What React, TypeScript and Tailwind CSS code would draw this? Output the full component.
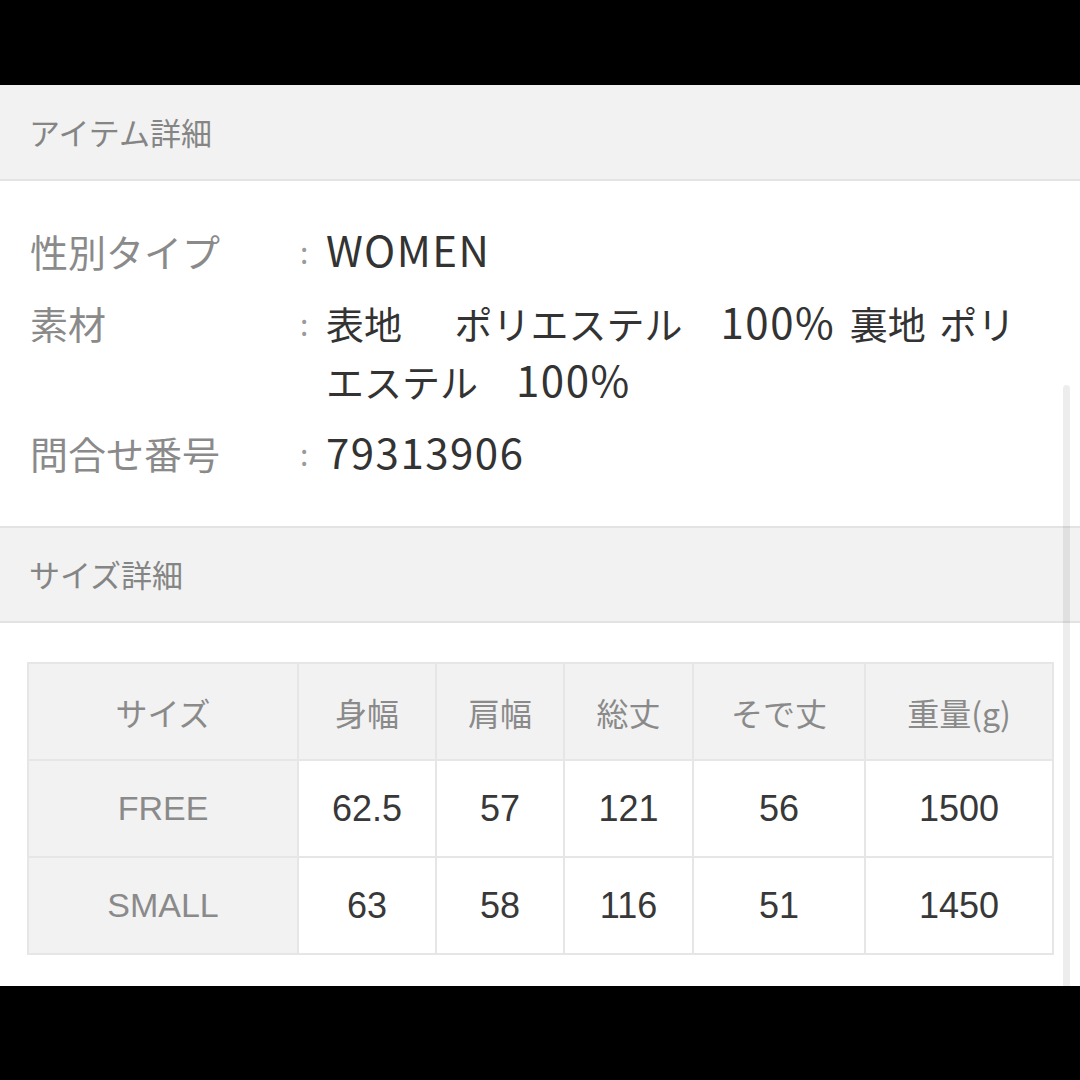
import React from "react";

const jp = "font-['Noto_Sans_CJK_JP','Noto_Sans_CJK_SC',sans-serif]";
const tb = "font-['Liberation_Sans','Noto_Sans_CJK_JP',sans-serif]";

const headers = ["サイズ", "身幅", "肩幅", "総丈", "そで丈", "重量(g)"];
const rows = [
  ["FREE", "62.5", "57", "121", "56", "1500"],
  ["SMALL", "63", "58", "116", "51", "1450"],
];

function L({ children }: { children: React.ReactNode }) {
  return <span className="text-[42px] leading-none tracking-[1.5px]">{children}</span>;
}

function InfoRow({ label, children }: { label: string; children: React.ReactNode }) {
  return (
    <div className="flex items-start">
      <div className="w-[270px] shrink-0 text-[38px] leading-[58px] text-[#8a8a8a]">{label}</div>
      <div className="w-[26px] shrink-0 text-[30px] leading-[58px] text-[#9a9a9a]">:</div>
      <div className="w-[700px] text-[38px] leading-[58px] text-[#333333]">{children}</div>
    </div>
  );
}

export default function App() {
  return (
    <div className={`relative w-[1080px] h-[1080px] overflow-hidden bg-white flex flex-col ${jp}`}>
      <div className="h-[85px] bg-black shrink-0" />
      <div className="h-[96px] shrink-0 bg-[#f2f2f2] border-b-2 border-[#e3e3e3] flex items-center pl-[29px] text-[31px] text-[#858585]">
        アイテム詳細
      </div>
      <div className="shrink-0 flex flex-col gap-[14px] pt-[41px] pb-[44px] pl-[30px]">
        <InfoRow label="性別タイプ">
          <L>WOMEN</L>
        </InfoRow>
        <InfoRow label="素材">
          表地　 <span className="ml-[6px]">ポリエステル</span>　<L>100%</L> <span className="ml-[6px]">裏地</span>{" "}
          <span className="ml-[5px]">ポリエステル</span>　<L>100%</L>
        </InfoRow>
        <InfoRow label="問合せ番号">
          <L>79313906</L>
        </InfoRow>
      </div>
      <div className="h-[97px] shrink-0 bg-[#f2f2f2] border-y-2 border-[#e3e3e3] flex items-center pl-[29px] text-[31px] text-[#858585]">
        サイズ詳細
      </div>
      <div className="pt-[39px] pl-[27px]">
        <div className={`inline-grid grid-cols-[268px_136px_126px_127px_170px_186px] auto-rows-[95px] gap-[2px] p-[2px] bg-[#e6e6e6] ${tb}`}>
          {headers.map((h) => (
            <div key={h} className={`bg-[#f2f2f2] flex items-center justify-center text-[32px] text-[#8a8a8a] ${jp}`}>
              {h}
            </div>
          ))}
          {rows.map((r) =>
            r.map((c, i) => (
              <div
                key={r[0] + i}
                className={
                  i === 0
                    ? "bg-[#f2f2f2] flex items-center justify-center text-[34px] text-[#8a8a8a]"
                    : "bg-white flex items-center justify-center text-[36px] text-[#383838]"
                }
              >
                {c}
              </div>
            ))
          )}
        </div>
      </div>
      <div className="absolute left-0 right-0 top-[986px] bottom-0 bg-black" />
      <div className="absolute left-[1063px] top-[385px] w-[7px] h-[601px] rounded-t-full bg-black/[0.07]" />
    </div>
  );
}
